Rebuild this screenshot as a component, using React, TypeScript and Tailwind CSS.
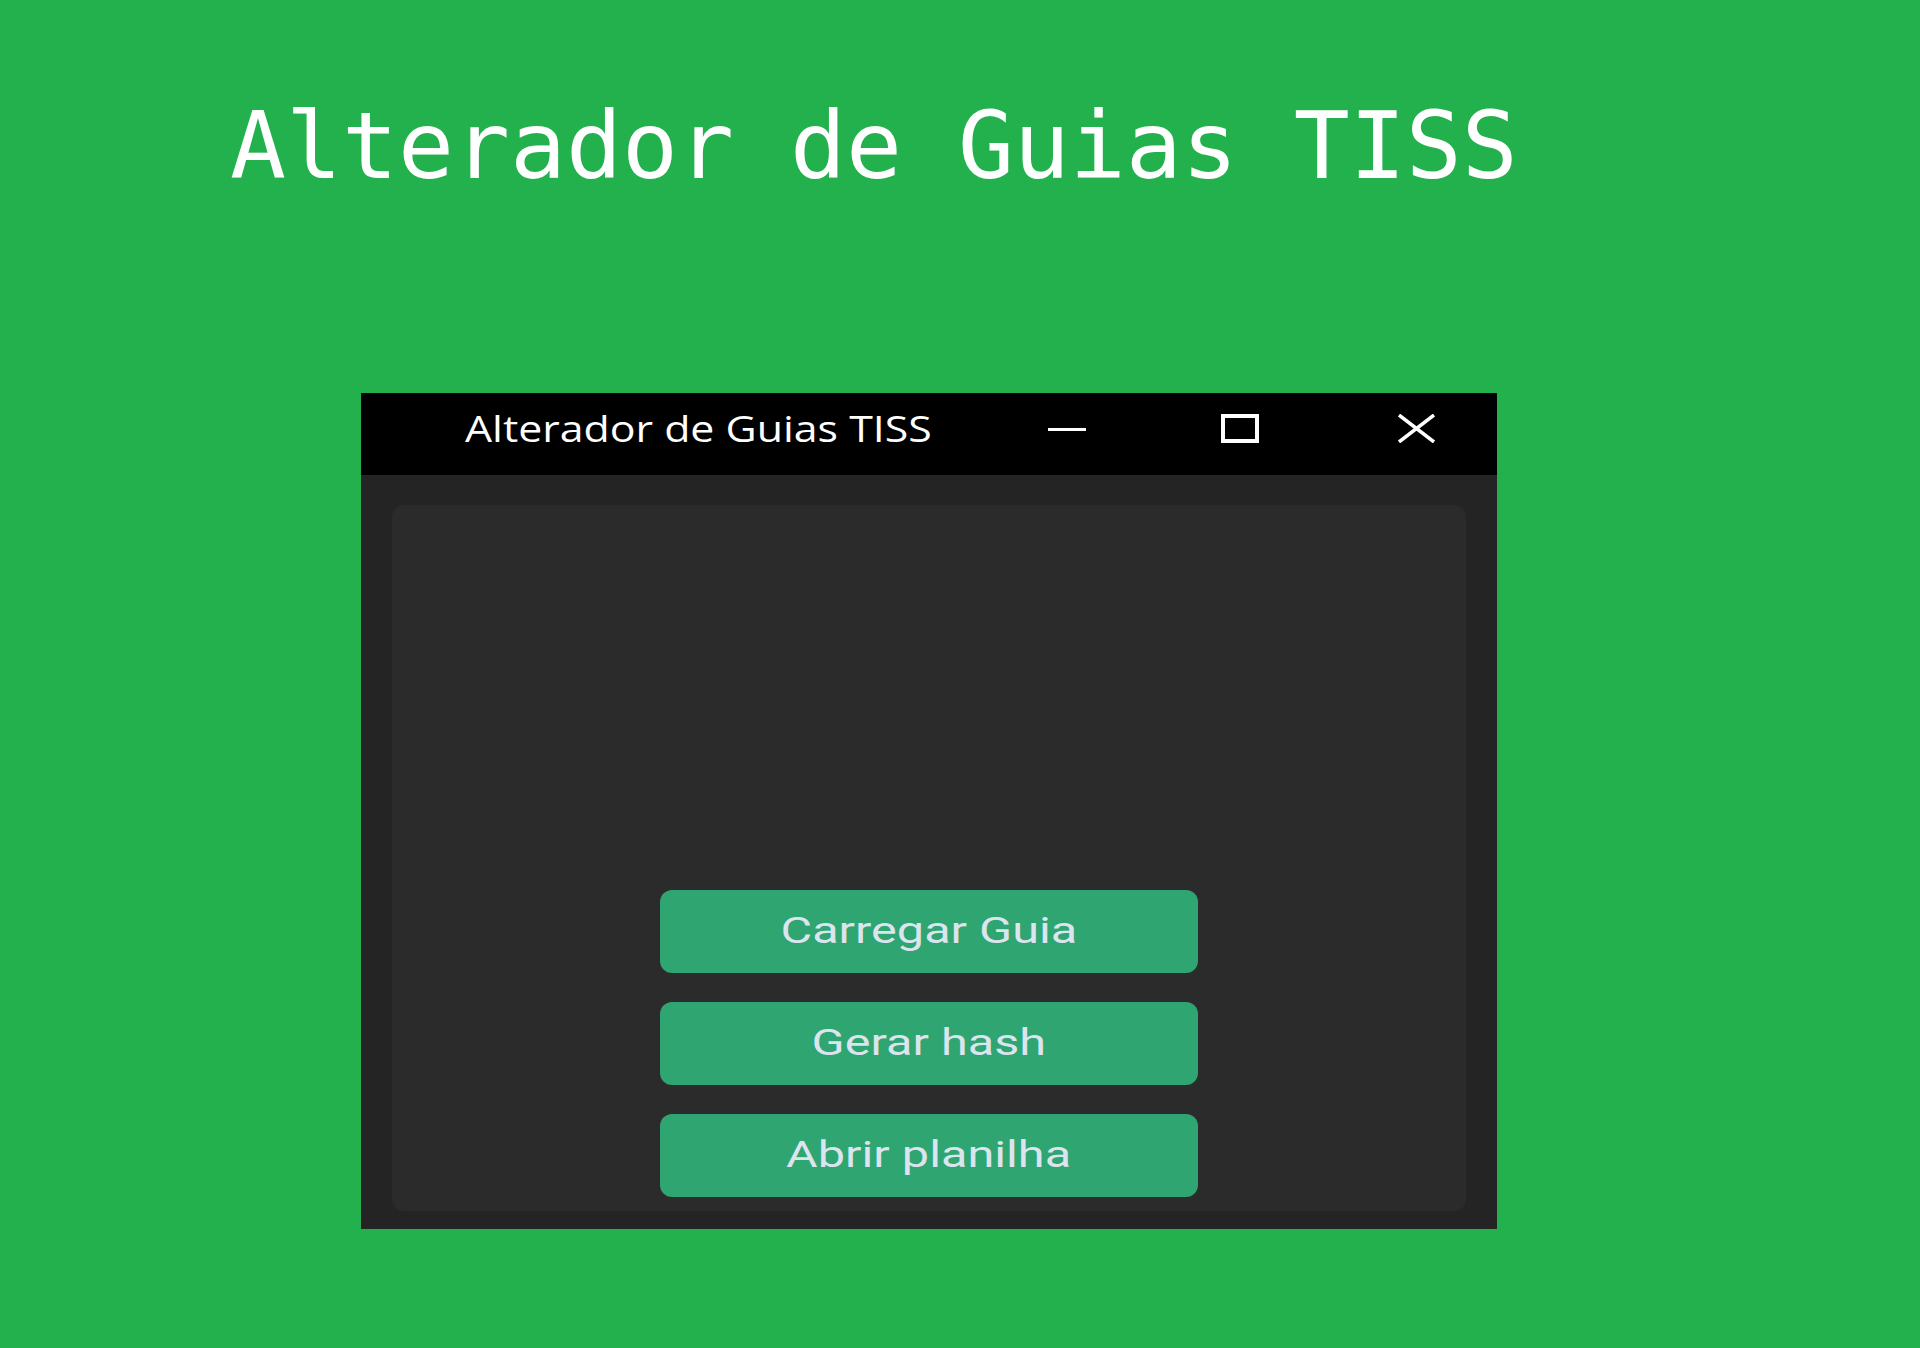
import { X } from "lucide-react";

function TitleBar() {
  return (
    <div className="flex h-[82px] items-start bg-black pr-[61px]">
      <div className="flex-1 pl-[104px] pt-[18px]">
        <span className="inline-block origin-left scale-x-[1.19] font-['Open_Sans',sans-serif] text-[36px] leading-none text-white">
          Alterador de Guias TISS
        </span>
      </div>
      <div className="mt-[35px] h-[3px] w-[38px] bg-white" />
      <div className="ml-[135px] mt-[21px] h-[29px] w-[38px] border-[4px] border-white" />
      <div className="ml-[138px] mt-[21px] flex h-[29px] w-[39px] items-center justify-center">
        <svg width="39" height="29" viewBox="0 0 39 29" className="text-white">
          <path d="M2 1 L37 28 M37 1 L2 28" stroke="currentColor" strokeWidth="3.5" fill="none" />
        </svg>
      </div>
    </div>
  );
}

function Button({ label }: { label: string }) {
  return (
    <button className="flex h-[83px] w-[538px] items-center justify-center rounded-[12px] bg-[#2fa572] pb-[2px]">
      <span className="inline-block scale-x-[1.35] font-['Roboto',sans-serif] text-[36px] leading-none text-[#dce4ee]">
        {label}
      </span>
    </button>
  );
}

export default function App() {
  return (
    <div className="min-h-[1348px] w-full bg-[#22b14c]">
      <h1 className="pl-[230px] pt-[100px] font-['DejaVu_Sans_Mono',monospace] text-[93px] font-normal leading-none text-white">
        Alterador de Guias TISS
      </h1>
      <div className="ml-[361px] mt-[200px] w-[1136px] bg-[#242424]">
        <TitleBar />
        <div className="px-[31px] pb-[18px] pt-[30px]">
          <div className="flex h-[706px] flex-col items-center justify-end gap-[29px] rounded-[12px] bg-[#2b2b2b] pb-[14px]">
            <Button label="Carregar Guia" />
            <Button label="Gerar hash" />
            <Button label="Abrir planilha" />
          </div>
        </div>
      </div>
    </div>
  );
}
